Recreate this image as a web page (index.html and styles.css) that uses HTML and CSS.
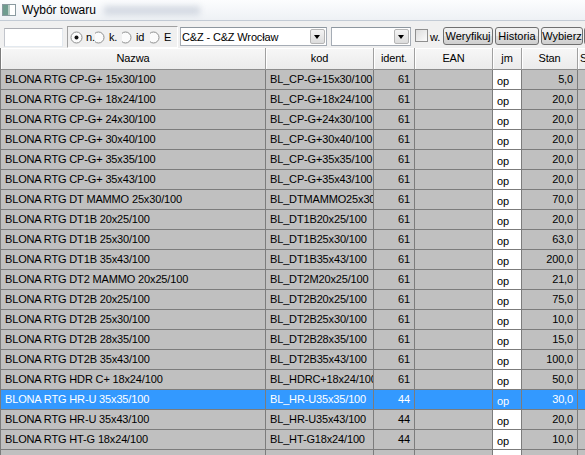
FILE: index.html
```html
<!DOCTYPE html>
<html lang="pl">
<head>
    <meta charset="UTF-8">
    <title>Wybór towaru</title>
    <link rel="stylesheet" href="styles.css">
</head>
<body>
    <div class="titlebar">
        <svg class="app-icon" width="14" height="12" viewBox="0 0 14 12">
            <rect x="0.5" y="0.5" width="13" height="11" fill="#fff" stroke="#8a9aa0"/>
            <rect x="1" y="1" width="5" height="10" fill="#6f9c8f"/>
            <rect x="6" y="1" width="2" height="10" fill="#b7cbc4"/>
        </svg>
        <span class="title">Wybór towaru</span>
        <span class="title-extra"></span>
    </div>

    <div class="toolbar">
        <input class="search" type="text">
        <div class="radio-group">
            <label class="radio first">
                <svg width="13" height="13" viewBox="0 0 13 13"><circle cx="6.5" cy="6.5" r="5.5" fill="#fbfbfb" stroke="#8e8f8f"/><circle cx="6.5" cy="6.5" r="2" fill="#111"/></svg>
                <span>n.</span>
            </label>
            <label class="radio">
                <svg width="13" height="13" viewBox="0 0 13 13"><circle cx="6.5" cy="6.5" r="5.5" fill="#fbfbfb" stroke="#8e8f8f"/></svg>
                <span>k.</span>
            </label>
            <label class="radio wide">
                <svg width="13" height="13" viewBox="0 0 13 13"><circle cx="6.5" cy="6.5" r="5.5" fill="#fbfbfb" stroke="#8e8f8f"/></svg>
                <span>id</span>
            </label>
            <label class="radio">
                <svg width="13" height="13" viewBox="0 0 13 13"><circle cx="6.5" cy="6.5" r="5.5" fill="#fbfbfb" stroke="#8e8f8f"/></svg>
                <span>E</span>
            </label>
        </div>
        <div class="combo store">
            <span class="combo-text">C&amp;Z - C&amp;Z Wrocław</span>
            <span class="combo-btn"></span>
        </div>
        <div class="combo group">
            <span class="combo-text"></span>
            <span class="combo-btn"></span>
        </div>
        <span class="check"></span>
        <span class="check-label">w.</span>
        <button class="btn verify">Weryfikuj</button>
        <button class="btn history">Historia</button>
        <button class="btn pick">Wybierz</button>
        <button class="btn more"></button>
    </div>

    <div class="grid">
        <div class="row head">
            <div class="cell">Nazwa</div>
            <div class="cell">kod</div>
            <div class="cell">ident.</div>
            <div class="cell">EAN</div>
            <div class="cell">jm</div>
            <div class="cell">Stan</div>
            <div class="cell last">S</div>
        </div>
        <div class="row"><div class="cell">BLONA RTG CP-G+ 15x30/100</div><div class="cell">BL_CP-G+15x30/100</div><div class="cell num">61</div><div class="cell"></div><div class="cell jm">op</div><div class="cell num">5,0</div><div class="cell"></div></div>
        <div class="row"><div class="cell">BLONA RTG CP-G+ 18x24/100</div><div class="cell">BL_CP-G+18x24/100</div><div class="cell num">61</div><div class="cell"></div><div class="cell jm">op</div><div class="cell num">20,0</div><div class="cell"></div></div>
        <div class="row"><div class="cell">BLONA RTG CP-G+ 24x30/100</div><div class="cell">BL_CP-G+24x30/100</div><div class="cell num">61</div><div class="cell"></div><div class="cell jm">op</div><div class="cell num">20,0</div><div class="cell"></div></div>
        <div class="row"><div class="cell">BLONA RTG CP-G+ 30x40/100</div><div class="cell">BL_CP-G+30x40/100</div><div class="cell num">61</div><div class="cell"></div><div class="cell jm">op</div><div class="cell num">20,0</div><div class="cell"></div></div>
        <div class="row"><div class="cell">BLONA RTG CP-G+ 35x35/100</div><div class="cell">BL_CP-G+35x35/100</div><div class="cell num">61</div><div class="cell"></div><div class="cell jm">op</div><div class="cell num">20,0</div><div class="cell"></div></div>
        <div class="row"><div class="cell">BLONA RTG CP-G+ 35x43/100</div><div class="cell">BL_CP-G+35x43/100</div><div class="cell num">61</div><div class="cell"></div><div class="cell jm">op</div><div class="cell num">20,0</div><div class="cell"></div></div>
        <div class="row"><div class="cell">BLONA RTG DT MAMMO 25x30/100</div><div class="cell">BL_DTMAMMO25x30/100</div><div class="cell num">61</div><div class="cell"></div><div class="cell jm">op</div><div class="cell num">70,0</div><div class="cell"></div></div>
        <div class="row"><div class="cell">BLONA RTG DT1B 20x25/100</div><div class="cell">BL_DT1B20x25/100</div><div class="cell num">61</div><div class="cell"></div><div class="cell jm">op</div><div class="cell num">20,0</div><div class="cell"></div></div>
        <div class="row"><div class="cell">BLONA RTG DT1B 25x30/100</div><div class="cell">BL_DT1B25x30/100</div><div class="cell num">61</div><div class="cell"></div><div class="cell jm">op</div><div class="cell num">63,0</div><div class="cell"></div></div>
        <div class="row"><div class="cell">BLONA RTG DT1B 35x43/100</div><div class="cell">BL_DT1B35x43/100</div><div class="cell num">61</div><div class="cell"></div><div class="cell jm">op</div><div class="cell num">200,0</div><div class="cell"></div></div>
        <div class="row"><div class="cell">BLONA RTG DT2 MAMMO 20x25/100</div><div class="cell">BL_DT2M20x25/100</div><div class="cell num">61</div><div class="cell"></div><div class="cell jm">op</div><div class="cell num">21,0</div><div class="cell"></div></div>
        <div class="row"><div class="cell">BLONA RTG DT2B 20x25/100</div><div class="cell">BL_DT2B20x25/100</div><div class="cell num">61</div><div class="cell"></div><div class="cell jm">op</div><div class="cell num">75,0</div><div class="cell"></div></div>
        <div class="row"><div class="cell">BLONA RTG DT2B 25x30/100</div><div class="cell">BL_DT2B25x30/100</div><div class="cell num">61</div><div class="cell"></div><div class="cell jm">op</div><div class="cell num">10,0</div><div class="cell"></div></div>
        <div class="row"><div class="cell">BLONA RTG DT2B 28x35/100</div><div class="cell">BL_DT2B28x35/100</div><div class="cell num">61</div><div class="cell"></div><div class="cell jm">op</div><div class="cell num">15,0</div><div class="cell"></div></div>
        <div class="row"><div class="cell">BLONA RTG DT2B 35x43/100</div><div class="cell">BL_DT2B35x43/100</div><div class="cell num">61</div><div class="cell"></div><div class="cell jm">op</div><div class="cell num">100,0</div><div class="cell"></div></div>
        <div class="row"><div class="cell">BLONA RTG HDR C+ 18x24/100</div><div class="cell">BL_HDRC+18x24/100</div><div class="cell num">61</div><div class="cell"></div><div class="cell jm">op</div><div class="cell num">50,0</div><div class="cell"></div></div>
        <div class="row selected"><div class="cell">BLONA RTG HR-U 35x35/100</div><div class="cell">BL_HR-U35x35/100</div><div class="cell num">44</div><div class="cell"></div><div class="cell jm">op</div><div class="cell num">30,0</div><div class="cell"></div></div>
        <div class="row"><div class="cell">BLONA RTG HR-U 35x43/100</div><div class="cell">BL_HR-U35x43/100</div><div class="cell num">44</div><div class="cell"></div><div class="cell jm">op</div><div class="cell num">20,0</div><div class="cell"></div></div>
        <div class="row"><div class="cell">BLONA RTG HT-G 18x24/100</div><div class="cell">BL_HT-G18x24/100</div><div class="cell num">44</div><div class="cell"></div><div class="cell jm">op</div><div class="cell num">10,0</div><div class="cell"></div></div>
        <div class="row"><div class="cell"></div><div class="cell"></div><div class="cell"></div><div class="cell"></div><div class="cell jm"></div><div class="cell"></div><div class="cell"></div></div>
    </div>
</body>
</html>
```

FILE: styles.css
```css
* {
    box-sizing: border-box;
}
body {
    margin: 0;
    width: 585px;
    height: 455px;
    overflow: hidden;
    background: #f0f0f0;
    font-family: "Liberation Sans", Arial, sans-serif;
    font-size: 11px;
    letter-spacing: -0.15px;
    color: #000;
}

/* window caption */
.titlebar {
    height: 21px;
    display: flex;
    align-items: center;
    padding-left: 2px;
    background: linear-gradient(#fcfdfe, #eef1f5);
    border-bottom: 1px solid #c3cbd5;
    font-size: 12px;
    letter-spacing: 0;
}
.app-icon {
    margin-right: 6px;
}
.title-extra {
    width: 96px;
    height: 9px;
    margin-left: 8px;
    background: #b3bccb;
    opacity: 0.5;
    filter: blur(3px);
}

/* search bar */
.toolbar {
    height: 27px;
    display: flex;
    align-items: flex-start;
    padding: 5px 0 0 4px;
    overflow: hidden;
}
.toolbar > * {
    flex: none;
}
.search {
    width: 59px;
    height: 19px;
    margin: 2px 4px 0 0;
    border: 1px solid #e3e9ef;
    border-top-color: #abadb3;
    border-left-color: #c2c5cc;
    background: #fff;
}
.radio-group {
    height: 22px;
    display: flex;
    align-items: center;
    border: 1px solid #fff;
    border-top-color: #a0a0a0;
    border-left-color: #a0a0a0;
}
.radio {
    width: 27px;
    display: flex;
    align-items: center;
    overflow: hidden;
}
.radio.wide {
    width: 28px;
}
.radio svg {
    flex: none;
    margin: 0 4px 0 -3px;
}
.radio.first svg {
    margin: 0 3px 0 2px;
}
.combo {
    height: 19px;
    margin-top: 1px;
    display: flex;
    align-items: center;
    background: #fff;
    border: 1px solid #a5acb5;
    border-top-color: #8e979f;
}
.combo.store {
    width: 147px;
    margin-left: 2px;
}
.combo.group {
    width: 80px;
    margin-left: 4px;
}
.combo-text {
    flex: 1;
    padding-left: 1px;
    white-space: nowrap;
}
.combo-btn {
    position: relative;
    width: 15px;
    height: 15px;
    margin-right: 1px;
    background: linear-gradient(#f4f4f4, #dcdcdc);
    border: 1px solid #b5b5b5;
    border-radius: 2px;
}
.combo-btn::after {
    content: "";
    position: absolute;
    left: 3px;
    top: 5px;
    border-left: 3.5px solid transparent;
    border-right: 3.5px solid transparent;
    border-top: 4px solid #000;
}
.check {
    width: 13px;
    height: 13px;
    margin: 3px 2px 0 4px;
    background: linear-gradient(135deg, #dcdcdc, #fbfbfb);
    border: 1px solid #8f8f8f;
}
.check-label {
    margin-top: 5px;
    width: 13px;
}
.btn {
    height: 18px;
    margin: 1px 2px 0 0;
    padding: 0;
    font: inherit;
    line-height: 16px;
    color: #000;
    border: 1px solid #707070;
    border-radius: 3px;
    background: linear-gradient(#f2f2f2 0%, #ebebeb 49%, #dddddd 50%, #cfcfcf 100%);
}
.btn.verify {
    width: 50px;
}
.btn.history {
    width: 44px;
}
.btn.pick {
    width: 42px;
    margin-right: 1px;
}
.btn.more {
    width: 30px;
}

/* product grid */
.grid {
    border-left: 1px solid #7c7c7c;
}
.row {
    display: grid;
    grid-template-columns: 265px 108px 41px 78px 29px 56px 60px;
    height: 20px;
}
.cell {
    height: 20px;
    padding: 0 3px 0 4px;
    line-height: 19px;
    white-space: nowrap;
    overflow: hidden;
    background: #c0c0c0;
    border-right: 1px solid #7c7c7c;
    border-bottom: 1px solid #7c7c7c;
}
.cell.num {
    text-align: right;
    padding-right: 4px;
}
.cell.jm {
    background: #fff;
    padding-top: 2px;
}
.row.head {
    height: 22px;
}
.head .cell {
    height: 22px;
    line-height: 20px;
    text-align: center;
    padding: 0;
    background: linear-gradient(#f7f7f7, #ebebeb);
    border-right-color: #a0a0a0;
    border-bottom-color: #8c8c8c;
    box-shadow: inset 1px 1px #fff;
}
.head .cell.last {
    text-align: left;
    padding-left: 2px;
}
.row.selected .cell {
    background: #3399ff;
    color: #fff;
}
```
